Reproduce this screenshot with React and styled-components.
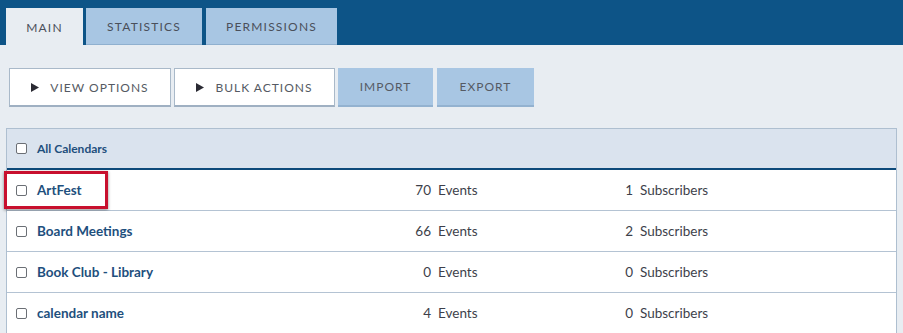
import React from "react";
import styled, { createGlobalStyle } from "styled-components";

const Global = createGlobalStyle`
  html, body { margin: 0; padding: 0; }
  body {
    background: #e8edf2;
    font-family: Lato, "Open Sans", Arial, sans-serif;
  }
`;

const TopBar = styled.div`
  background: #0d5487;
  height: 45px;
  box-sizing: border-box;
  padding: 8px 0 0 6px;
  display: flex;
  gap: 3px;
`;

const Tab = styled.div`
  height: 37px;
  box-sizing: border-box;
  width: ${(p) => p.$w}px;
  display: flex;
  align-items: center;
  justify-content: center;
  padding-top: 1px;
  font-size: 12px;
  letter-spacing: 1.2px;
  color: #4a4f5a;
  background: ${(p) => (p.$active ? "#e8edf2" : "#a8c6e3")};
  border-bottom: ${(p) => (p.$active ? "none" : "1px solid #8fb0cf")};
  margin-right: ${(p) => p.$mr || 0}px;
`;

const Toolbar = styled.div`
  display: flex;
  gap: 3px;
  padding: 23px 0 0 9px;
`;

const Button = styled.div`
  height: 39px;
  box-sizing: border-box;
  width: ${(p) => p.$w}px;
  display: flex;
  align-items: center;
  justify-content: center;
  gap: 11px;
  font-size: 12px;
  letter-spacing: 1px;
  color: #555a63;
  background: ${(p) => (p.$filled ? "#a8c6e3" : "#ffffff")};
  border: ${(p) => (p.$filled ? "none" : "1px solid #a9b9c9")};
  border-bottom: ${(p) => (p.$filled ? "2px solid #93b2d0" : "2px solid #9fb0c2")};
  margin-right: ${(p) => p.$mr || 0}px;
`;

const Table = styled.div`
  margin: 21px 6px 0 6px;
  border: 1px solid #aebfd0;
  border-bottom: none;
  background: #fff;
`;

const Row = styled.div`
  position: relative;
  display: grid;
  grid-template-columns: 30px 354px 202px 1fr;
  align-items: center;
  height: ${(p) => (p.$header ? 41 : 41)}px;
  box-sizing: border-box;
  background: ${(p) => (p.$header ? "#dae3ee" : "#ffffff")};
  border-bottom: ${(p) => (p.$header ? "2px solid #0d4a7a" : "1px solid #b4c3d3")};
`;

const Check = styled.span`
  display: block;
  width: 9px;
  height: 9px;
  margin-left: 9px;
  border: 1px solid #6b6f75;
  border-radius: 2px;
  background: #fff;
`;

const Name = styled.span`
  font-weight: 700;
  font-size: ${(p) => (p.$small ? 12 : 13.5)}px;
  color: #1e4f7d;
`;

const Stat = styled.span`
  display: flex;
  align-items: center;
  font-size: 13.5px;
  color: #3d3f4a;
`;

const Num = styled.span`
  display: inline-block;
  width: 40px;
  text-align: right;
  margin-right: 7px;
`;

const Highlight = styled.div`
  position: absolute;
  left: -3px;
  top: 1px;
  width: 104px;
  height: 38px;
  box-sizing: border-box;
  border: 3px solid #c8102e;
  box-shadow: 0 1px 3px rgba(0, 0, 0, 0.45);
  pointer-events: none;
`;

const Play = () => (
  <svg width="8" height="9" viewBox="0 0 8 9">
    <path d="M0 0 L8 4.5 L0 9 Z" fill="#2a2a33" />
  </svg>
);

const rows = [
  { name: "ArtFest", ev: 70, sub: 1, hl: true },
  { name: "Board Meetings", ev: 66, sub: 2 },
  { name: "Book Club - Library", ev: 0, sub: 0 },
  { name: "calendar name", ev: 4, sub: 0 },
];

export default function App() {
  return (
    <>
      <Global />
      <TopBar>
        <Tab $active $w={77}>MAIN</Tab>
        <Tab $w={116} $mr={1}>STATISTICS</Tab>
        <Tab $w={131}>PERMISSIONS</Tab>
      </TopBar>
      <Toolbar>
        <Button $w={162}>
          <Play />
          VIEW OPTIONS
        </Button>
        <Button $w={161}>
          <Play />
          BULK ACTIONS
        </Button>
        <Button $filled $w={95} $mr={1}>IMPORT</Button>
        <Button $filled $w={97}>EXPORT</Button>
      </Toolbar>
      <Table>
        <Row $header>
          <Check />
          <Name $small>All Calendars</Name>
        </Row>
        {rows.map((r) => (
          <Row key={r.name}>
            <Check />
            <Name>{r.name}</Name>
            <Stat>
              <Num>{r.ev}</Num>Events
            </Stat>
            <Stat>
              <Num>{r.sub}</Num>Subscribers
            </Stat>
            {r.hl && <Highlight />}
          </Row>
        ))}
      </Table>
    </>
  );
}
